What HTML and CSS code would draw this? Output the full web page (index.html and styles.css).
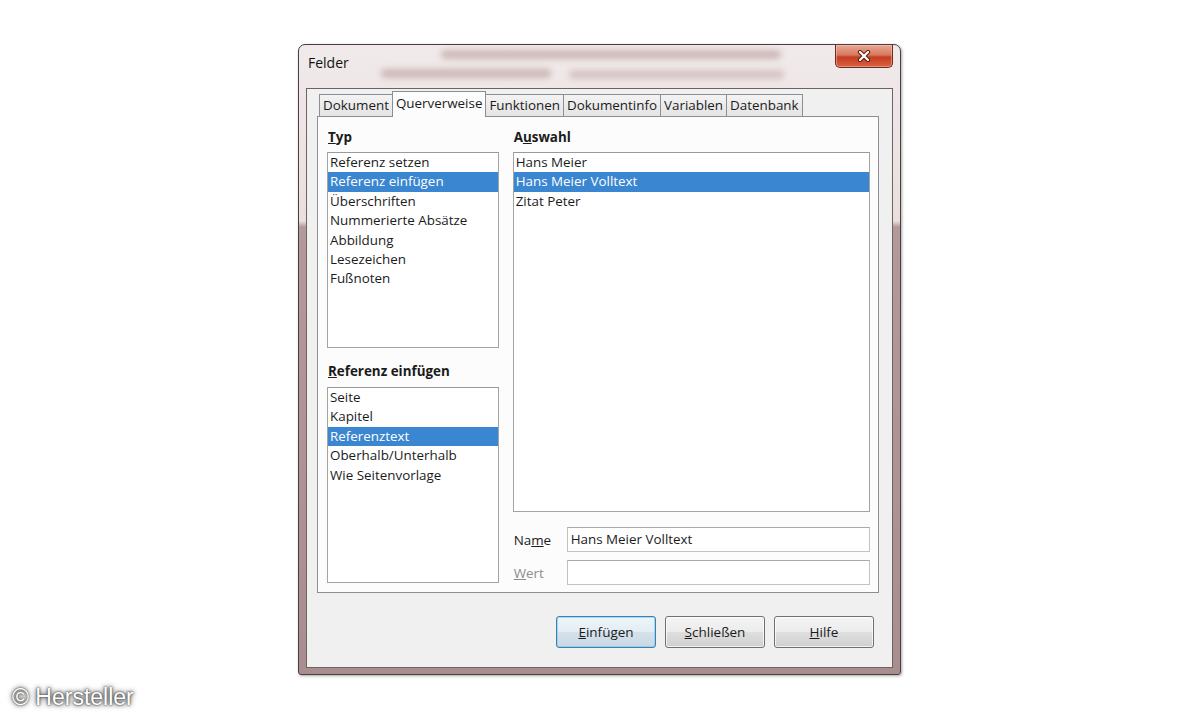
FILE: index.html
```html
<!DOCTYPE html>
<html>
<head>
  <meta charset="utf-8">
  <link rel="stylesheet" href="styles.css">
</head>
<body>
  <div class="window">
    <div class="titlebar">
      <div class="glass-blur">
        <span class="blur-line one"></span>
        <span class="blur-line two"></span>
        <span class="blur-line three"></span>
      </div>
      <div class="title">Felder</div>
      <button class="close-btn">
        <svg width="14" height="12" viewBox="0 0 14 12">
          <path d="M3 2 L11 10 M11 2 L3 10" stroke="#5a1d12" stroke-width="4.2" stroke-linecap="round"/>
          <path d="M3 2 L11 10 M11 2 L3 10" stroke="#fff" stroke-width="2.2" stroke-linecap="round"/>
        </svg>
      </button>
    </div>

    <div class="client">
      <div class="tabs">
        <div class="tab">Dokument</div>
        <div class="tab active">Querverweise</div>
        <div class="tab">Funktionen</div>
        <div class="tab">Dokumentinfo</div>
        <div class="tab">Variablen</div>
        <div class="tab">Datenbank</div>
      </div>

      <div class="panel">
        <div class="col-left">
          <div class="label"><u>T</u>yp</div>
          <ul class="list short">
            <li>Referenz setzen</li>
            <li class="selected">Referenz einfügen</li>
            <li>Überschriften</li>
            <li>Nummerierte Absätze</li>
            <li>Abbildung</li>
            <li>Lesezeichen</li>
            <li>Fußnoten</li>
          </ul>
          <div class="label second"><u>R</u>eferenz einfügen</div>
          <ul class="list short">
            <li>Seite</li>
            <li>Kapitel</li>
            <li class="selected">Referenztext</li>
            <li>Oberhalb/Unterhalb</li>
            <li>Wie Seitenvorlage</li>
          </ul>
        </div>

        <div class="col-right">
          <div class="label">A<u>u</u>swahl</div>
          <ul class="list tall">
            <li>Hans Meier</li>
            <li class="selected">Hans Meier Volltext</li>
            <li>Zitat Peter</li>
          </ul>
          <div class="field-row first">
            <span class="field-label">Na<u>m</u>e</span>
            <div class="input">Hans Meier Volltext</div>
          </div>
          <div class="field-row disabled">
            <span class="field-label"><u>W</u>ert</span>
            <div class="input"></div>
          </div>
        </div>
      </div>

      <div class="buttons">
        <button class="btn focused"><u>E</u>infügen</button>
        <button class="btn"><u>S</u>chließen</button>
        <button class="btn"><u>H</u>ilfe</button>
      </div>
    </div>
  </div>

  <div class="credit">© Hersteller</div>
</body>
</html>
```

FILE: styles.css
```css
body {
  margin: 0;
  width: 1200px;
  height: 720px;
  overflow: hidden;
  position: relative;
  background: #fff;
  font-family: "Open Sans", "Noto Sans", sans-serif;
  font-size: 13.4px;
  color: #1b1b1b;
}

/* window frame (aero glass, pinkish) */
.window {
  width: 603px;
  height: 631px;
  margin: 44px 0 0 298px;
  box-sizing: border-box;
  border: 1px solid #4a3f3f;
  border-radius: 7px 7px 3px 3px;
  background: linear-gradient(to bottom, #f1eaea 0, #e9dfdf 176px, #b39999 182px, #a88e8e 100%);
  box-shadow: 1px 1px 3px rgba(0, 0, 0, .35);
  display: flex;
  flex-direction: column;
}

.titlebar {
  height: 43px;
  position: relative;
  display: flex;
  align-items: flex-start;
  padding-left: 9px;
}

.glass-blur {
  position: absolute;
  inset: 0;
  overflow: hidden;
}
.blur-line {
  position: absolute;
  height: 9px;
  background: #9a6e6e;
  opacity: .4;
  filter: blur(3px);
  border-radius: 4px;
}
.blur-line.one { left: 142px; width: 340px; top: 5px; }
.blur-line.two { left: 82px; width: 170px; top: 24px; }
.blur-line.three { left: 270px; width: 215px; top: 25px; opacity: .3; }

.title {
  position: relative;
  margin-top: 8px;
  font-size: 14px;
  line-height: 19px;
  color: #111;
}

.close-btn {
  position: relative;
  margin-left: auto;
  margin-right: 7px;
  width: 58px;
  height: 23px;
  padding: 0;
  border: 1px solid #6b2b20;
  border-top: none;
  border-radius: 0 0 5px 5px;
  background: linear-gradient(to bottom, #e9a896 0, #d9785f 45%, #c53d22 55%, #d8623f 100%);
  box-shadow: inset 0 0 0 1px rgba(255, 210, 190, .45);
  display: flex;
  align-items: center;
  justify-content: center;
}

.client {
  flex: 1;
  margin: 0 7px 6px;
  border: 1px solid #6f6262;
  background: #f0f0f0;
  padding: 2px 13px 0 10px;
  display: flex;
  flex-direction: column;
}

/* tabs */
.tabs {
  display: flex;
  align-items: flex-end;
  height: 25px;
  padding-left: 2px;
}
.tab {
  box-sizing: border-box;
  height: 22px;
  padding: 0 3px;
  margin-right: -1px;
  border: 1px solid #8c8e94;
  border-bottom: none;
  line-height: 20px;
  background: linear-gradient(to bottom, #f3f3f3, #e4e4e4);
}
.tab.active {
  height: 26px;
  margin-bottom: -1px;
  line-height: 23px;
  background: #fcfcfc;
  position: relative;
  z-index: 1;
}

.panel {
  box-sizing: border-box;
  height: 477px;
  border: 1px solid #8c8e94;
  background: #fcfcfc;
  padding: 11px 8px 0 9px;
  display: flex;
  gap: 14px;
}

.col-left { width: 172px; }
.col-right { width: 358px; }

.label {
  font-weight: 700;
  line-height: 19px;
  margin-bottom: 5px;
  padding-left: 1px;
}
.label.second {
  margin-top: 14px;
  margin-bottom: 6px;
}

.list {
  box-sizing: border-box;
  margin: 0;
  padding: 0;
  list-style: none;
  background: #fff;
  border: 1px solid #a3a3a3;
  border-top-color: #9a9a9a;
}
.list.short { height: 196px; }
.list.tall { height: 360px; }
.list li {
  line-height: 19.4px;
  padding-left: 2px;
  white-space: nowrap;
}
.list li.selected {
  background: #3a86d1;
  color: #fff;
}

.field-row {
  display: flex;
  align-items: center;
  margin-top: 8px;
}
.field-row.first { margin-top: 15px; }
.field-label {
  width: 54px;
  padding-left: 1px;
  box-sizing: border-box;
}
.field-row.disabled .field-label { color: #8d8d8d; }
.input {
  box-sizing: border-box;
  flex: 1;
  height: 25px;
  line-height: 23px;
  padding-left: 3px;
  background: #fff;
  border: 1px solid #c2c2c2;
  border-top-color: #a9a9a9;
}

/* dialog buttons */
.buttons {
  display: flex;
  justify-content: flex-end;
  gap: 9px;
  margin-top: 23px;
  padding-right: 5px;
}
.btn {
  width: 100px;
  height: 32px;
  padding: 0;
  border: 1px solid #707070;
  border-radius: 3px;
  background: linear-gradient(to bottom, #f4f4f4 0, #ececec 48%, #dedede 52%, #d0d0d0 100%);
  box-shadow: inset 0 0 0 1px rgba(255, 255, 255, .7);
  font-family: inherit;
  font-size: 13.5px;
  color: #1b1b1b;
}
.btn.focused {
  border-color: #3c7fb1;
  background: linear-gradient(to bottom, #eef5f9 0, #e3edf3 48%, #d3e1ea 52%, #c9d9e3 100%);
  box-shadow: inset 0 0 0 1px rgba(120, 200, 240, .6);
}

.credit {
  position: absolute;
  left: 12px;
  top: 684px;
  font-family: "Liberation Sans", Arial, sans-serif;
  font-size: 23px;
  color: #fff;
  text-shadow: 0 0 2px #222, 0 0 4px #555, 0 0 6px #888;
}
```
